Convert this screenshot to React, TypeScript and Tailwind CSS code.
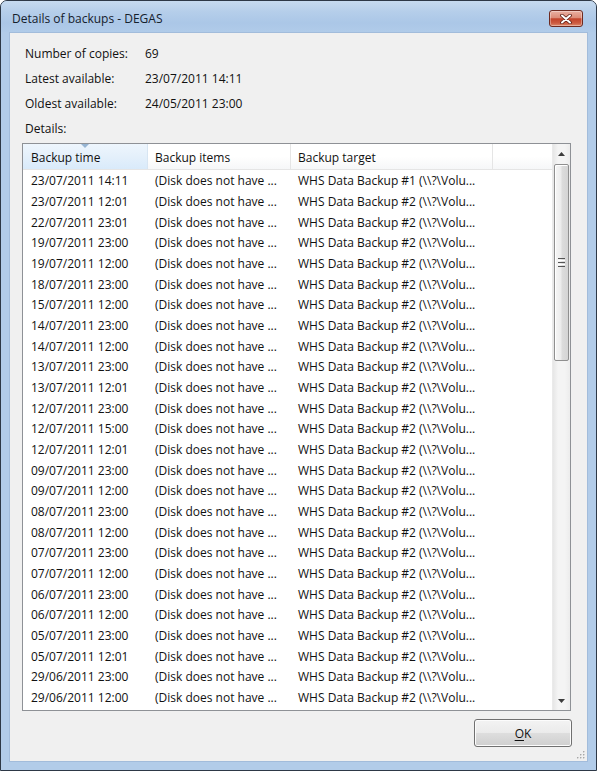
import React from "react";

const rows: [string, number][] = [
  ["23/07/2011 14:11", 1],
  ["23/07/2011 12:01", 2],
  ["22/07/2011 23:01", 2],
  ["19/07/2011 23:00", 2],
  ["19/07/2011 12:00", 2],
  ["18/07/2011 23:00", 2],
  ["15/07/2011 12:00", 2],
  ["14/07/2011 23:00", 2],
  ["14/07/2011 12:00", 2],
  ["13/07/2011 23:00", 2],
  ["13/07/2011 12:01", 2],
  ["12/07/2011 23:00", 2],
  ["12/07/2011 15:00", 2],
  ["12/07/2011 12:01", 2],
  ["09/07/2011 23:00", 2],
  ["09/07/2011 12:00", 2],
  ["08/07/2011 23:00", 2],
  ["08/07/2011 12:00", 2],
  ["07/07/2011 23:00", 2],
  ["07/07/2011 12:00", 2],
  ["06/07/2011 23:00", 2],
  ["06/07/2011 12:00", 2],
  ["05/07/2011 23:00", 2],
  ["05/07/2011 12:01", 2],
  ["29/06/2011 23:00", 2],
  ["29/06/2011 12:00", 2],
];

function CloseButton() {
  return (
    <div className="w-[34px] h-[17px] mt-[9px] mr-[13px] rounded-[3px] border border-[#6e2a20] bg-[linear-gradient(to_bottom,#eab0a2_0%,#dc8c78_45%,#c2432a_52%,#cc5a40_80%,#de8a6c_100%)] flex items-center justify-center shadow-[inset_0_0_0_1px_rgba(255,255,255,0.35)]">
      <svg width="12" height="10" viewBox="0 0 12 10">
        <path d="M2 1.5 L10 8.5 M10 1.5 L2 8.5" stroke="#5a1d14" strokeWidth="3.6" strokeLinecap="round" />
        <path d="M2 1.5 L10 8.5 M10 1.5 L2 8.5" stroke="#ffffff" strokeWidth="2" strokeLinecap="round" />
      </svg>
    </div>
  );
}

function ScrollBar() {
  return (
    <div className="w-[18px] flex flex-col bg-[linear-gradient(to_right,#e6e6e6,#f4f4f4_30%,#f4f4f4_70%,#ececec)] border-l border-[#eaeaea]">
      <div className="h-[20px] flex items-center justify-center">
        <svg width="7" height="4" viewBox="0 0 7 4">
          <polygon points="0,4 3.5,0 7,4" fill="#3c3c3c" />
        </svg>
      </div>
      <div className="flex-1 flex flex-col">
        <div className="h-[197px] mx-[1px] rounded-[2px] border border-[#8f8f8f] bg-[linear-gradient(to_right,#f6f6f6,#ececec_45%,#dcdcdc_55%,#d4d4d4)] shadow-[inset_1px_1px_0_#ffffff] flex items-center justify-center">
          <div className="flex flex-col gap-[1px]">
            <div className="w-[7px] h-[1px] bg-[#555]" />
            <div className="w-[7px] h-[1px] bg-[#fff]" />
            <div className="w-[7px] h-[1px] bg-[#555]" />
            <div className="w-[7px] h-[1px] bg-[#fff]" />
            <div className="w-[7px] h-[1px] bg-[#555]" />
          </div>
        </div>
      </div>
      <div className="h-[18px] flex items-center justify-center">
        <svg width="7" height="4" viewBox="0 0 7 4">
          <polygon points="0,0 7,0 3.5,4" fill="#3c3c3c" />
        </svg>
      </div>
    </div>
  );
}

export default function App() {
  return (
    <div className="w-[597px] h-[772px] bg-white font-['Open_Sans','Noto_Sans',sans-serif] text-[12px] text-[#111]">
      <div className="w-[597px] h-[771px] flex flex-col border border-[#2d3846] rounded-t-[7px] overflow-hidden bg-[#b2cce9]">
        {/* title bar */}
        <div className="h-[31px] flex items-start justify-between bg-[linear-gradient(to_bottom,#c6daef,#b5ceea_35%,#abc7e7_70%,#b0cbe9)]">
          <div className="pl-[11px] pt-[10px] leading-[16px] text-[12px] text-[#15202c]">Details of backups - DEGAS</div>
          <CloseButton />
        </div>
        {/* body */}
        <div className="flex-1 flex flex-col px-[8px] pb-[8px]">
          <div className="flex-1 relative bg-[#f0f0f0] border border-[#a2bcdb] flex flex-col pl-[12px] pr-[15px] pt-[8px]">
            <div className="flex flex-col pl-[3px]">
              <div className="h-[25px] flex items-center">
                <div className="w-[120px]">Number of copies:</div>
                <div>69</div>
              </div>
              <div className="h-[25px] flex items-center">
                <div className="w-[120px]">Latest available:</div>
                <div>23/07/2011 14:11</div>
              </div>
              <div className="h-[25px] flex items-center">
                <div className="w-[120px]">Oldest available:</div>
                <div>24/05/2011 23:00</div>
              </div>
              <div className="h-[25px] flex items-center">
                <div>Details:</div>
              </div>
            </div>
            {/* list */}
            <div className="mt-[2px] w-[549px] h-[568px] border border-[#8e9196] bg-white flex">
              <div className="flex-1 flex flex-col overflow-hidden">
                <div className="h-[26px] flex border-b border-[#e5e5e5] bg-[linear-gradient(to_bottom,#ffffff,#ffffff_50%,#f6f7f8)]">
                  <div className="relative w-[125px] pl-2 pt-[2px] flex items-center border-r border-[#d7e5f2] bg-[linear-gradient(to_bottom,#eef6fd,#e4f0fb_50%,#d9eafa)]">
                    <div className="absolute top-0 left-[58px] w-0 h-0 border-l-[4px] border-r-[4px] border-t-[4px] border-l-transparent border-r-transparent border-t-[#97b5d3]" />
                    Backup time
                  </div>
                  <div className="w-[143px] pl-[7px] pt-[2px] flex items-center border-r border-[#e5e5e5]">Backup items</div>
                  <div className="w-[202px] pl-[7px] pt-[2px] flex items-center border-r border-[#e5e5e5]">Backup target</div>
                  <div className="flex-1" />
                </div>
                {rows.map(([t, n], i) => (
                  <div key={i} className="h-[20.68px] pt-[2px] flex items-center whitespace-nowrap">
                    <div className="w-[125px] pl-2 overflow-hidden">{t}</div>
                    <div className="w-[143px] pl-[7px] overflow-hidden">(Disk does not have ...</div>
                    <div className="w-[202px] pl-[7px] overflow-hidden">{`WHS Data Backup #${n} (\\\\?\\Volu...`}</div>
                  </div>
                ))}
              </div>
              <ScrollBar />
            </div>
            {/* button row */}
            <div className="flex justify-end mt-[8px]">
              <button className="w-[98px] h-[28px] pt-[2px] rounded-[3px] border border-[#707070] bg-[linear-gradient(to_bottom,#f3f3f3,#ebebeb_48%,#dddddd_52%,#cfcfcf)] shadow-[inset_0_0_0_1px_#fcfcfc] flex items-center justify-center text-[12px] text-[#111]">
                <span><span className="underline underline-offset-2">O</span>K</span>
              </button>
            </div>
            {/* resize grip */}
            <div className="absolute right-[2px] bottom-[2px] w-[9px] h-[9px]">
              <svg width="9" height="9" viewBox="0 0 9 9">
                {[
                  [7, 1], [7, 4], [4, 4], [7, 7], [4, 7], [1, 7],
                ].map(([x, y], k) => (
                  <g key={k}>
                    <rect x={x + 0.5} y={y + 0.5} width="1.5" height="1.5" fill="#ffffff" />
                    <rect x={x} y={y} width="1.5" height="1.5" fill="#a8a8a8" />
                  </g>
                ))}
              </svg>
            </div>
          </div>
        </div>
      </div>
    </div>
  );
}
